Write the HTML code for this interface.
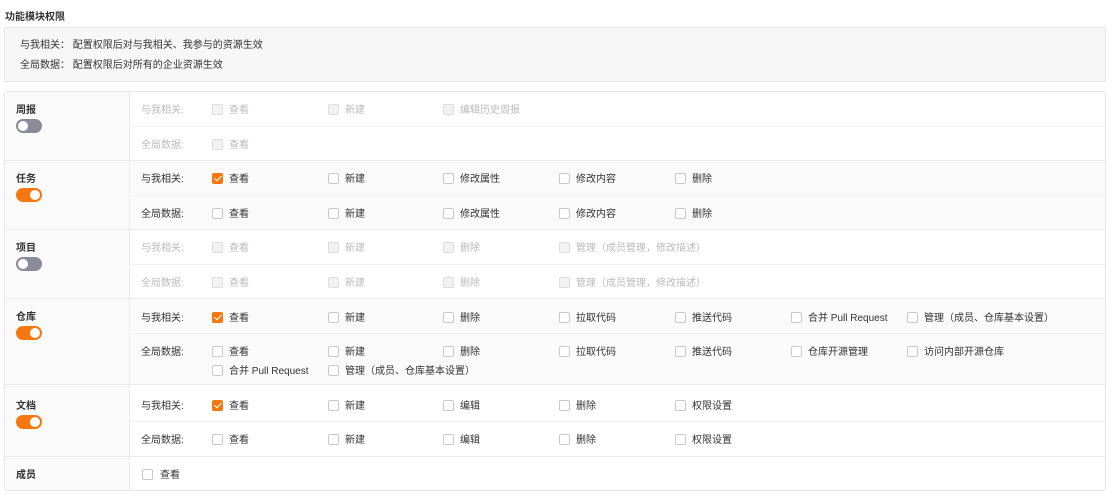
<!DOCTYPE html>
<html><head><meta charset="utf-8"><style>
*{margin:0;padding:0;box-sizing:border-box}
body{width:1117px;height:502px;background:#fff;font-family:"Liberation Sans","Noto Sans CJK SC",sans-serif;font-size:10px;color:#333;position:relative;overflow:hidden}
.a{position:absolute;white-space:nowrap;line-height:12px;margin-top:2px}
.cb{position:absolute;width:11px;height:11px;border:1px solid #c9c9c9;border-radius:2px;background:#fff}
.cb.d{background:#f2f2f2;border-color:#ddd}
.cb.c{background:#f5770f;border-color:#f5770f}
.cb.c:after{content:"";position:absolute;left:3px;top:0px;width:3px;height:6px;border:solid #fff;border-width:0 1.3px 1.3px 0;transform:rotate(45deg)}
.dis{color:#bbb}
.tg{position:absolute;left:16px;width:26px;height:14px;border-radius:7px;background:#f5770f}
.tg:after{content:"";position:absolute;top:2px;right:2px;width:10px;height:10px;border-radius:50%;background:#fff}
.tg.off{background:#8a8b99}
.tg.off:after{right:auto;left:2px}
.h{position:absolute;left:5px;right:12px;height:1px;background:#ebebeb}
.hr{position:absolute;left:131px;right:12px;height:1px;background:#f0f0f0}
.bg{position:absolute;left:131px;right:12px;background:#fafafa}
</style></head><body>
<div class="a" style="left:5px;top:10px;font-weight:bold">功能模块权限</div>
<div style="position:absolute;left:4px;top:27px;width:1102px;height:55px;background:#f7f7f7;border:1px solid #e6e6e6;border-radius:2px"></div>
<div class="a" style="left:20px;top:38px">与我相关：&nbsp;配置权限后对与我相关、我参与的资源生效</div>
<div class="a" style="left:20px;top:58px">全局数据：&nbsp;配置权限后对所有的企业资源生效</div>

<div style="position:absolute;left:4px;top:91px;width:1102px;height:400px;border:1px solid #e6e6e6;border-radius:3px"></div>
<div style="position:absolute;left:5px;top:92px;width:125px;height:398px;background:#fafafa;border-right:1px solid #ececec"></div>
<div class="bg" style="top:161px;height:68px"></div>
<div class="bg" style="top:299px;height:85px"></div>

<div class="h" style="top:160px"></div>
<div class="h" style="top:229px"></div>
<div class="h" style="top:298px"></div>
<div class="h" style="top:384px"></div>
<div class="h" style="top:456px"></div>
<div class="hr" style="top:126px"></div>
<div class="hr" style="top:195px"></div>
<div class="hr" style="top:264px"></div>
<div class="hr" style="top:333px"></div>
<div class="hr" style="top:421px"></div>

<div class="a" style="left:16px;top:103px;font-weight:bold">周报</div><div class="tg off" style="top:119px"></div>
<div class="a" style="left:16px;top:172px;font-weight:bold">任务</div><div class="tg" style="top:188px"></div>
<div class="a" style="left:16px;top:241px;font-weight:bold">项目</div><div class="tg off" style="top:257px"></div>
<div class="a" style="left:16px;top:310px;font-weight:bold">仓库</div><div class="tg" style="top:326px"></div>
<div class="a" style="left:16px;top:399px;font-weight:bold">文档</div><div class="tg" style="top:415px"></div>
<div class="a" style="left:16px;top:468px;font-weight:bold">成员</div>

<div class="a dis" style="left:141px;top:103px">与我相关:</div>
<div class="cb d" style="left:212px;top:104px"></div><div class="a dis" style="left:229px;top:103px">查看</div>
<div class="cb d" style="left:328px;top:104px"></div><div class="a dis" style="left:345px;top:103px">新建</div>
<div class="cb d" style="left:443px;top:104px"></div><div class="a dis" style="left:460px;top:103px">编辑历史周报</div>
<div class="a dis" style="left:141px;top:138px">全局数据:</div>
<div class="cb d" style="left:212px;top:139px"></div><div class="a dis" style="left:229px;top:138px">查看</div>

<div class="a" style="left:141px;top:172px">与我相关:</div>
<div class="cb c" style="left:212px;top:173px"></div><div class="a" style="left:229px;top:172px">查看</div>
<div class="cb" style="left:328px;top:173px"></div><div class="a" style="left:345px;top:172px">新建</div>
<div class="cb" style="left:443px;top:173px"></div><div class="a" style="left:460px;top:172px">修改属性</div>
<div class="cb" style="left:559px;top:173px"></div><div class="a" style="left:576px;top:172px">修改内容</div>
<div class="cb" style="left:675px;top:173px"></div><div class="a" style="left:692px;top:172px">删除</div>
<div class="a" style="left:141px;top:207px">全局数据:</div>
<div class="cb" style="left:212px;top:208px"></div><div class="a" style="left:229px;top:207px">查看</div>
<div class="cb" style="left:328px;top:208px"></div><div class="a" style="left:345px;top:207px">新建</div>
<div class="cb" style="left:443px;top:208px"></div><div class="a" style="left:460px;top:207px">修改属性</div>
<div class="cb" style="left:559px;top:208px"></div><div class="a" style="left:576px;top:207px">修改内容</div>
<div class="cb" style="left:675px;top:208px"></div><div class="a" style="left:692px;top:207px">删除</div>

<div class="a dis" style="left:141px;top:241px">与我相关:</div>
<div class="cb d" style="left:212px;top:242px"></div><div class="a dis" style="left:229px;top:241px">查看</div>
<div class="cb d" style="left:328px;top:242px"></div><div class="a dis" style="left:345px;top:241px">新建</div>
<div class="cb d" style="left:443px;top:242px"></div><div class="a dis" style="left:460px;top:241px">删除</div>
<div class="cb d" style="left:559px;top:242px"></div><div class="a dis" style="left:576px;top:241px">管理（成员管理，修改描述）</div>
<div class="a dis" style="left:141px;top:276px">全局数据:</div>
<div class="cb d" style="left:212px;top:277px"></div><div class="a dis" style="left:229px;top:276px">查看</div>
<div class="cb d" style="left:328px;top:277px"></div><div class="a dis" style="left:345px;top:276px">新建</div>
<div class="cb d" style="left:443px;top:277px"></div><div class="a dis" style="left:460px;top:276px">删除</div>
<div class="cb d" style="left:559px;top:277px"></div><div class="a dis" style="left:576px;top:276px">管理（成员管理，修改描述）</div>

<div class="a" style="left:141px;top:311px">与我相关:</div>
<div class="cb c" style="left:212px;top:312px"></div><div class="a" style="left:229px;top:311px">查看</div>
<div class="cb" style="left:328px;top:312px"></div><div class="a" style="left:345px;top:311px">新建</div>
<div class="cb" style="left:443px;top:312px"></div><div class="a" style="left:460px;top:311px">删除</div>
<div class="cb" style="left:559px;top:312px"></div><div class="a" style="left:576px;top:311px">拉取代码</div>
<div class="cb" style="left:675px;top:312px"></div><div class="a" style="left:692px;top:311px">推送代码</div>
<div class="cb" style="left:791px;top:312px"></div><div class="a" style="left:808px;top:311px">合并 Pull Request</div>
<div class="cb" style="left:907px;top:312px"></div><div class="a" style="left:924px;top:311px">管理（成员、仓库基本设置）</div>
<div class="a" style="left:141px;top:345px">全局数据:</div>
<div class="cb" style="left:212px;top:346px"></div><div class="a" style="left:229px;top:345px">查看</div>
<div class="cb" style="left:328px;top:346px"></div><div class="a" style="left:345px;top:345px">新建</div>
<div class="cb" style="left:443px;top:346px"></div><div class="a" style="left:460px;top:345px">删除</div>
<div class="cb" style="left:559px;top:346px"></div><div class="a" style="left:576px;top:345px">拉取代码</div>
<div class="cb" style="left:675px;top:346px"></div><div class="a" style="left:692px;top:345px">推送代码</div>
<div class="cb" style="left:791px;top:346px"></div><div class="a" style="left:808px;top:345px">仓库开源管理</div>
<div class="cb" style="left:907px;top:346px"></div><div class="a" style="left:924px;top:345px">访问内部开源仓库</div>
<div class="cb" style="left:212px;top:365px"></div><div class="a" style="left:229px;top:364px">合并 Pull Request</div>
<div class="cb" style="left:328px;top:365px"></div><div class="a" style="left:345px;top:364px">管理（成员、仓库基本设置）</div>

<div class="a" style="left:141px;top:399px">与我相关:</div>
<div class="cb c" style="left:212px;top:400px"></div><div class="a" style="left:229px;top:399px">查看</div>
<div class="cb" style="left:328px;top:400px"></div><div class="a" style="left:345px;top:399px">新建</div>
<div class="cb" style="left:443px;top:400px"></div><div class="a" style="left:460px;top:399px">编辑</div>
<div class="cb" style="left:559px;top:400px"></div><div class="a" style="left:576px;top:399px">删除</div>
<div class="cb" style="left:675px;top:400px"></div><div class="a" style="left:692px;top:399px">权限设置</div>
<div class="a" style="left:141px;top:433px">全局数据:</div>
<div class="cb" style="left:212px;top:434px"></div><div class="a" style="left:229px;top:433px">查看</div>
<div class="cb" style="left:328px;top:434px"></div><div class="a" style="left:345px;top:433px">新建</div>
<div class="cb" style="left:443px;top:434px"></div><div class="a" style="left:460px;top:433px">编辑</div>
<div class="cb" style="left:559px;top:434px"></div><div class="a" style="left:576px;top:433px">删除</div>
<div class="cb" style="left:675px;top:434px"></div><div class="a" style="left:692px;top:433px">权限设置</div>

<div class="cb" style="left:142px;top:469px"></div><div class="a" style="left:160px;top:468px">查看</div>
</body></html>
